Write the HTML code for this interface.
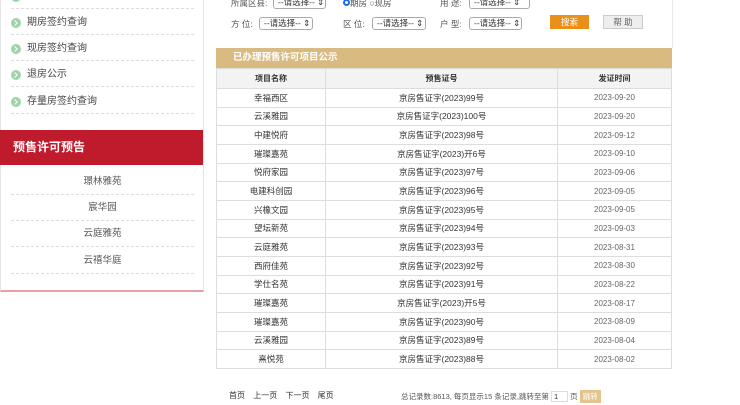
<!DOCTYPE html>
<html><head><meta charset="utf-8"><style>
*{margin:0;padding:0;box-sizing:border-box}
body{width:740px;height:405px;background:#fff;font-family:"Liberation Sans","Noto Sans CJK SC",sans-serif;position:relative;overflow:hidden;color:#333}
.abs{position:absolute}
.left{left:0;top:-2px;width:204px;height:294px;border:1px solid #e4e4e4;border-bottom:2px solid #e8a0a8}
.li{position:absolute;left:11px;width:183px;height:26px;border-bottom:1px dashed #ddd;font-size:10px;color:#444;line-height:27px;padding-left:16px}
.li i{position:absolute;left:0;top:9px;width:10px;height:10px;border-radius:50%;background:#9fd3a8}
.li i:after{content:"";position:absolute;left:2px;top:3px;width:3px;height:3px;border-top:1px solid #fff;border-right:1px solid #fff;transform:rotate(45deg)}
.red{left:0;top:130px;width:203px;height:35px;background:#c01b2c;color:#fff;font-weight:bold;font-size:12px;line-height:35px;padding-left:13px}
.pl{position:absolute;left:11px;width:183px;height:26px;border-bottom:1px dashed #ddd;font-size:9.5px;color:#555;text-align:center;line-height:26px}
.lab{font-size:8.5px;color:#555}
.sel{position:absolute;height:13px;border:1px solid #aaa;border-radius:3px;font-size:8.5px;line-height:11px;padding-left:4px;color:#333;background:#fff}
table{position:absolute;left:216px;top:68px;width:456px;border-collapse:collapse;font-size:8.5px}
td,th{border:1px solid #ddd;height:18.67px;text-align:center;padding:0}
th{background:#f3f3f3;font-size:8px;height:20px}
td.d{color:#666;font-size:8px}
</style></head><body>
<div class="abs left"></div>
<div class="li" style="top:-17px"><i></i></div>
<div class="li" style="top:9px"><i></i>期房签约查询</div>
<div class="li" style="top:35px"><i></i>现房签约查询</div>
<div class="li" style="top:61px"><i></i>退房公示</div>
<div class="li" style="top:88px"><i></i>存量房签约查询</div>
<div class="abs red">预售许可预告</div>
<div class="pl" style="top:169px">璟林雅苑</div>
<div class="pl" style="top:195px">宸华园</div>
<div class="pl" style="top:221px">云庭雅苑</div>
<div class="pl" style="top:248px">云禧华庭</div>

<div class="abs lab" style="left:231px;top:-3px">所属区县:</div>
<div class="sel" style="left:273px;top:-4px;width:53px">--请选择-- ⇕</div>
<div class="abs lab" style="left:343px;top:-3px"><span style="display:inline-block;width:7px;height:7px;border-radius:50%;border:2px solid #1a6fe0"></span>期房 ○现房</div>
<div class="abs lab" style="left:440px;top:-3px">用 途:</div>
<div class="sel" style="left:469px;top:-4px;width:61px">--请选择-- ⇕</div>
<div class="abs lab" style="left:231px;top:18px">方 位:</div>
<div class="sel" style="left:259px;top:17px;width:54px">--请选择-- ⇕</div>
<div class="abs lab" style="left:343px;top:18px">区 位:</div>
<div class="sel" style="left:372px;top:17px;width:54px">--请选择-- ⇕</div>
<div class="abs lab" style="left:440px;top:18px">户 型:</div>
<div class="sel" style="left:469px;top:17px;width:53px">--请选择-- ⇕</div>
<div class="abs" style="left:550px;top:15px;width:39px;height:14px;background:#e8901a;color:#fff;font-size:8.5px;text-align:center;line-height:14px">搜索</div>
<div class="abs" style="left:603px;top:15px;width:40px;height:14px;background:#eee;border:1px solid #ccc;color:#666;font-size:8.5px;text-align:center;line-height:12px">帮 助</div>

<div class="abs" style="left:216px;top:48px;width:456px;height:20px;background:#d9bb82;color:#fff;font-weight:bold;font-size:9.5px;line-height:20px;padding-left:17px">已办理预售许可项目公示</div>
<table>
<tr><th style="width:109px">项目名称</th><th style="width:232px">预售证号</th><th>发证时间</th></tr>
<tr><td>幸福西区</td><td>京房售证字(2023)99号</td><td class="d">2023-09-20</td></tr>
<tr><td>云溪雅园</td><td>京房售证字(2023)100号</td><td class="d">2023-09-20</td></tr>
<tr><td>中建悦府</td><td>京房售证字(2023)98号</td><td class="d">2023-09-12</td></tr>
<tr><td>璀璨嘉苑</td><td>京房售证字(2023)开6号</td><td class="d">2023-09-10</td></tr>
<tr><td>悦府家园</td><td>京房售证字(2023)97号</td><td class="d">2023-09-06</td></tr>
<tr><td>电建科创园</td><td>京房售证字(2023)96号</td><td class="d">2023-09-05</td></tr>
<tr><td>兴橡文园</td><td>京房售证字(2023)95号</td><td class="d">2023-09-05</td></tr>
<tr><td>望坛新苑</td><td>京房售证字(2023)94号</td><td class="d">2023-09-03</td></tr>
<tr><td>云庭雅苑</td><td>京房售证字(2023)93号</td><td class="d">2023-08-31</td></tr>
<tr><td>西府佳苑</td><td>京房售证字(2023)92号</td><td class="d">2023-08-30</td></tr>
<tr><td>学仕名苑</td><td>京房售证字(2023)91号</td><td class="d">2023-08-22</td></tr>
<tr><td>璀璨嘉苑</td><td>京房售证字(2023)开5号</td><td class="d">2023-08-17</td></tr>
<tr><td>璀璨嘉苑</td><td>京房售证字(2023)90号</td><td class="d">2023-08-09</td></tr>
<tr><td>云溪雅园</td><td>京房售证字(2023)89号</td><td class="d">2023-08-04</td></tr>
<tr><td>熹悦苑</td><td>京房售证字(2023)88号</td><td class="d">2023-08-02</td></tr>
</table>
<div class="abs" style="left:672px;top:0;width:1px;height:48px;background:#e8e8e8"></div>
<div class="abs" style="left:229px;top:390px;font-size:8px;color:#333;word-spacing:6px">首页 上一页 下一页 尾页</div>
<div class="abs" style="left:401px;top:390px;font-size:7.5px;color:#555">总记录数:8613, 每页显示15 条记录,跳转至第 <span style="display:inline-block;width:17px;border:1px solid #ddd;padding-left:2px;color:#333">1</span> 页 <span style="display:inline-block;background:#e3c48e;color:#fff;padding:1px 3px">跳转</span></div>
</body></html>
